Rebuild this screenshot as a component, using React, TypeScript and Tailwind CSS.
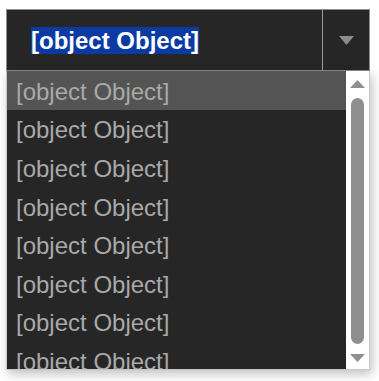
export default function App() {
  const items = Array.from({ length: 8 }, () => '[object Object]');

  return (
    <div className="w-[379px] h-[381px] bg-white pt-[9px] pl-[6px] overflow-hidden" style={{ fontFamily: '"Liberation Sans", Arial, sans-serif' }}>
      {/* Select box */}
      <div className="w-[364px] h-[62px] flex border border-[#8c8c8c] bg-[#262626]">
        <div className="flex-1 flex items-center pl-[24px]">
          <span className="bg-[#0b3aa3] text-white font-bold text-[24px] leading-[27px]">[object Object]</span>
        </div>
        <div className="w-[47px] border-l border-[#9a9a9a] flex items-center justify-center">
          <svg width="15" height="9" viewBox="0 0 15 9">
            <path d="M0 0 L15 0 L7.5 9 Z" fill="#8c8c8c" />
          </svg>
        </div>
      </div>

      {/* Dropdown list */}
      <div className="w-[364px] h-[299px] flex border-l border-r border-b border-[#c8c8c8] bg-[#262626] shadow-[2px_4px_10px_rgba(0,0,0,0.25)] overflow-hidden">
        <ul className="flex-1 flex flex-col">
          {items.map((item, i) => (
            <li
              key={i}
              className={`h-[38.6px] shrink-0 flex items-center pl-[9px] pt-[3px] text-[24px] leading-none text-[#a9a9a9] ${i === 0 ? 'bg-[#545454]' : ''}`}
            >
              {item}
            </li>
          ))}
        </ul>
        {/* Scrollbar */}
        <div className="w-[23px] bg-white flex flex-col items-center pt-[9px] pb-[7px]">
          <svg width="15" height="8" viewBox="0 0 15 8">
            <path d="M7.5 0 L15 8 L0 8 Z" fill="#8f8f8f" />
          </svg>
          <div className="w-[13px] flex-1 my-[10px] rounded-full bg-[#8f8f8f]" />
          <svg width="15" height="8" viewBox="0 0 15 8">
            <path d="M0 0 L15 0 L7.5 8 Z" fill="#8f8f8f" />
          </svg>
        </div>
      </div>
    </div>
  );
}
